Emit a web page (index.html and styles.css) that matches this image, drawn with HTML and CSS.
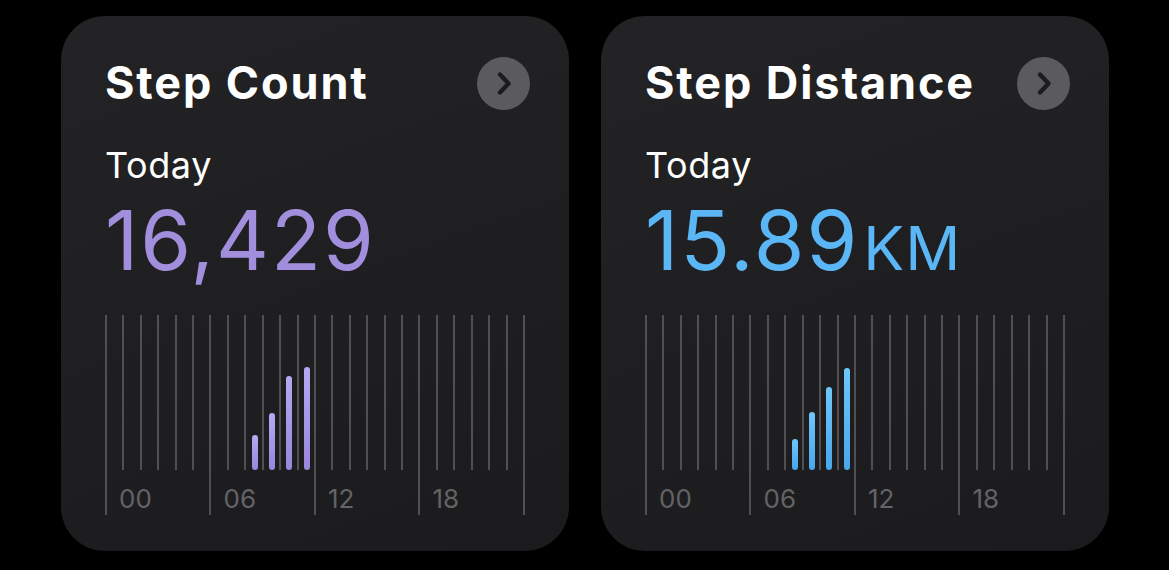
FILE: index.html
```html
<!DOCTYPE html>
<html lang="en">
<head>
    <meta charset="UTF-8">
    <meta name="viewport" content="width=device-width, initial-scale=1.0">
    <title>Activity Widgets</title>
    <link rel="stylesheet" href="styles.css">
</head>
<body>
    <div class="widgets">
        <div class="card steps">
            <div class="card-head">
                <h2>Step Count</h2>
                <button class="more" aria-label="More">
                    <svg width="53" height="53" viewBox="0 0 53 53"><circle cx="26.5" cy="26.5" r="26.5" fill="#5b5b5f"/><path d="M23 17.5 L31.5 26.5 L23 35.5" fill="none" stroke="#1c1c1e" stroke-width="4.4" stroke-linecap="round" stroke-linejoin="round"/></svg>
                </button>
            </div>
            <div class="period">Today</div>
            <div class="value">16,429</div>
            <div class="chart" id="stepsChart"></div>
        </div>

        <div class="card distance">
            <div class="card-head">
                <h2>Step Distance</h2>
                <button class="more" aria-label="More">
                    <svg width="53" height="53" viewBox="0 0 53 53"><circle cx="26.5" cy="26.5" r="26.5" fill="#5b5b5f"/><path d="M23 17.5 L31.5 26.5 L23 35.5" fill="none" stroke="#1c1c1e" stroke-width="4.4" stroke-linecap="round" stroke-linejoin="round"/></svg>
                </button>
            </div>
            <div class="period">Today</div>
            <div class="value">15.89<span class="unit">KM</span></div>
            <div class="chart" id="distanceChart"></div>
        </div>
    </div>

    <script>
        // bar heights in px, keyed by hour
        const stepsData = { 8: 35, 9: 57, 10: 94, 11: 103 };
        const distanceData = { 8: 31, 9: 58, 10: 83, 11: 102 };

        function buildChart(id, data) {
            const chart = document.getElementById(id);
            for (let h = 0; h < 24; h++) {
                const cell = document.createElement('div');
                cell.className = h % 6 === 0 ? 'hour major' : 'hour';
                if (h % 6 === 0) {
                    const label = document.createElement('span');
                    label.className = 'label';
                    label.textContent = String(h).padStart(2, '0');
                    cell.appendChild(label);
                } else if (data[h]) {
                    const bar = document.createElement('div');
                    bar.className = 'bar';
                    bar.style.height = data[h] + 'px';
                    cell.appendChild(bar);
                }
                chart.appendChild(cell);
            }
        }

        buildChart('stepsChart', stepsData);
        buildChart('distanceChart', distanceData);
    </script>
</body>
</html>
```

FILE: styles.css
```css
body {
    margin: 0;
    background: #000;
    font-family: Inter, "Noto Sans", sans-serif;
    color: #fff;
}
.widgets {
    display: flex;
    gap: 32px;
    padding: 16px 59px 0 61px;
}
.card {
    width: 508px;
    height: 535px;
    box-sizing: border-box;
    padding: 41px 44px 0;
    border-radius: 44px;
    background: linear-gradient(160deg, #232325, #1b1b1d);
}
.card-head {
    display: flex;
    justify-content: space-between;
    align-items: center;
    height: 52px;
}
.card-head h2 {
    margin: 0;
    font-size: 45px;
    line-height: 52px;
    font-weight: 700;
    letter-spacing: 1.9px;
}
.more {
    border: none;
    background: none;
    padding: 0;
    margin-right: -5px;
    width: 53px;
    height: 53px;
    display: flex;
}
.period {
    margin-top: 36px;
    font-size: 36px;
    line-height: 40px;
    letter-spacing: 0.6px;
}
.value {
    margin-top: 16px;
    height: 80px;
    font-size: 82px;
    line-height: 80px;
    font-weight: 400;
    letter-spacing: 2px;
}
.steps .value {
    color: #a18fdd;
}
.distance .value {
    color: #5ab6f5;
}
.unit {
    font-size: 61px;
    line-height: 0;
    margin-left: 4px;
    letter-spacing: 1px;
}
.chart {
    margin-top: 34px;
    width: 420px;
    box-sizing: border-box;
    display: grid;
    grid-template-columns: repeat(24, minmax(0, 1fr));
    align-items: start;
    height: 200px;
    border-right: 2px solid #505054;
}
.hour {
    min-width: 0;
    height: 155px;
    border-left: 2px solid #505054;
    display: flex;
    justify-content: center;
    align-items: flex-end;
}
.hour.major {
    height: 200px;
    justify-content: flex-start;
}
.label {
    font-size: 26px;
    line-height: 26px;
    color: #636366;
    padding-left: 12px;
    margin-bottom: 3px;
    white-space: nowrap;
}
.bar {
    flex: none;
    width: 6px;
    margin-left: 1px;
    border-radius: 3px;
}
.steps .bar {
    background: linear-gradient(#b6a9f2, #9886db);
}
.distance .bar {
    background: linear-gradient(#6ec6fb, #48a6ea);
}
```
